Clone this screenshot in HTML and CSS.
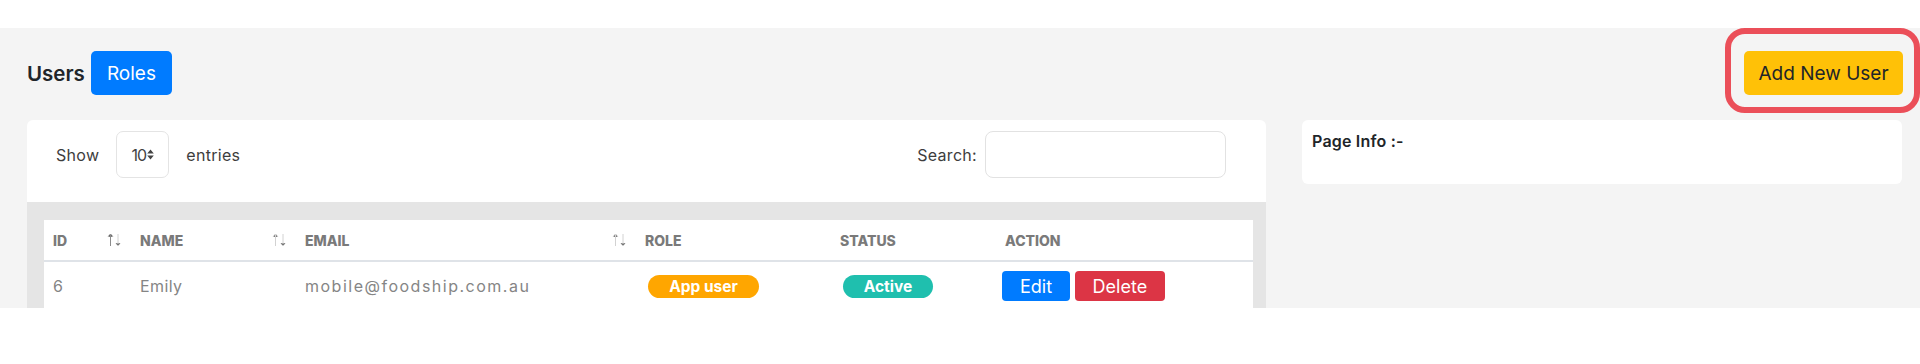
FILE: index.html
```html
<!DOCTYPE html>
<html lang="en">
<head>
    <meta charset="UTF-8">
    <title>Users</title>
    <link rel="stylesheet" href="styles.css">
</head>
<body>

    <div class="main">
        <div class="topbar">
            <div class="title-group">
                <h4>Users</h4>
                <button class="btn btn-primary btn-lg">Roles</button>
            </div>
            <div class="highlight">
                <button class="btn btn-warning btn-lg">Add New User</button>
            </div>
        </div>

        <div class="content">
            <!-- users table -->
            <div class="card">
                <div class="table-tools">
                    <div class="length">
                        <span>Show</span>
                        <div class="select">
                            10
                            <svg class="caret" width="7" height="11" viewBox="0 0 7 11"><path d="M3.5 0.5 L6.8 4.6 H0.2 Z M3.5 10.5 L6.8 6.4 H0.2 Z" fill="#444"/></svg>
                        </div>
                        <span>entries</span>
                    </div>
                    <div class="search">
                        <label for="search">Search:</label>
                        <input type="text" id="search">
                    </div>
                </div>

                <div class="table-wrap">
                    <table class="users">
                        <colgroup>
                            <col style="width: 87px">
                            <col style="width: 165px">
                            <col style="width: 340px">
                            <col style="width: 195px">
                            <col style="width: 165px">
                            <col style="width: 257px">
                        </colgroup>
                        <thead>
                            <tr>
                                <th>ID
                                    <svg class="sort" width="15" height="14" viewBox="0 0 15 14"><path d="M3.5 13 V1 M1.3 3.4 L3.5 1 L5.7 3.4" stroke="#8c8c8c"/><path d="M11 1 V13 M8.8 10.6 L11 13 L13.2 10.6" stroke="#d2d2d2"/></svg>
                                </th>
                                <th>Name
                                    <svg class="sort" width="15" height="14" viewBox="0 0 15 14"><path d="M3.5 13 V1 M1.3 3.4 L3.5 1 L5.7 3.4" stroke="#d2d2d2"/><path d="M11 1 V13 M8.8 10.6 L11 13 L13.2 10.6" stroke="#d2d2d2"/></svg>
                                </th>
                                <th>Email
                                    <svg class="sort" width="15" height="14" viewBox="0 0 15 14"><path d="M3.5 13 V1 M1.3 3.4 L3.5 1 L5.7 3.4" stroke="#d2d2d2"/><path d="M11 1 V13 M8.8 10.6 L11 13 L13.2 10.6" stroke="#d2d2d2"/></svg>
                                </th>
                                <th>Role</th>
                                <th>Status</th>
                                <th>Action</th>
                            </tr>
                        </thead>
                        <tbody>
                            <tr>
                                <td>6</td>
                                <td>Emily</td>
                                <td class="email">mobile@foodship.com.au</td>
                                <td><span class="badge badge-role">App user</span></td>
                                <td><span class="badge badge-active">Active</span></td>
                                <td class="actions">
                                    <button class="btn btn-primary btn-sm">Edit</button>
                                    <button class="btn btn-danger btn-sm">Delete</button>
                                </td>
                            </tr>
                        </tbody>
                    </table>
                </div>
            </div>

            <!-- side info -->
            <div class="info-panel">
                <h5>Page Info :-</h5>
            </div>
        </div>
    </div>

</body>
</html>
```

FILE: styles.css
```css
body {
    font-family: 'Inter', 'Open Sans', sans-serif;
    margin: 0;
    padding: 28px 0 0 0;
    background-color: #fff;
    color: #212529;
}

.main {
    background-color: #f4f4f4;
    height: 280px;
    overflow: hidden;
    padding: 0 17px 0 27px;
}

.topbar {
    display: flex;
    justify-content: space-between;
    align-items: center;
    padding-top: 23px;
}

.title-group {
    display: flex;
    align-items: center;
    gap: 6px;
}

.title-group h4 {
    margin: 0;
    font-size: 20.5px;
    font-weight: 600;
}

.btn {
    font-family: inherit;
    border: 1px solid transparent;
    border-radius: 5px;
    cursor: pointer;
    color: #fff;
}

.btn-lg {
    height: 44px;
    padding: 0 15px;
    font-size: 19px;
}

.btn-sm {
    height: 30px;
    padding: 0 17px;
    font-size: 18px;
    border-radius: 4px;
}

.btn-primary {
    background-color: #007bff;
}

.btn-danger {
    background-color: #dc3545;
}

.btn-warning {
    background-color: #ffc107;
    color: #212529;
    width: 159px;
    padding: 0;
}

.highlight {
    position: relative;
}

.highlight::after {
    content: "";
    position: absolute;
    top: -23px;
    bottom: -18px;
    left: -19px;
    right: -17px;
    border: 6px solid #eb4f59;
    border-radius: 20px;
    pointer-events: none;
}

.content {
    display: flex;
    align-items: flex-start;
    gap: 36px;
    margin-top: 25px;
}

.card {
    width: 1239px;
    flex-shrink: 0;
    background-color: #fff;
    border-radius: 6px;
}

.table-tools {
    height: 82px;
    box-sizing: border-box;
    display: flex;
    justify-content: space-between;
    align-items: flex-start;
    padding: 11px 40px 0 29px;
    font-size: 16px;
    letter-spacing: 0.3px;
    color: #3d3d3d;
}

.length {
    display: flex;
    align-items: center;
    gap: 17px;
}

.select {
    width: 53px;
    height: 47px;
    box-sizing: border-box;
    border: 1px solid #e4e4e4;
    border-radius: 7px;
    display: flex;
    align-items: center;
    justify-content: center;
    gap: 1px;
    font-size: 16px;
    letter-spacing: -1px;
    color: #444;
}

.search {
    display: flex;
    align-items: center;
    gap: 8px;
}

.search input {
    width: 241px;
    height: 47px;
    box-sizing: border-box;
    border: 1px solid #e2e2e2;
    border-radius: 8px;
    outline: none;
}

.table-wrap {
    background-color: #e5e5e5;
    padding: 18px 13px 40px 17px;
}

.users {
    width: 1209px;
    table-layout: fixed;
    border-collapse: collapse;
    background-color: #fff;
}

.users th {
    height: 40px;
    padding: 0 9px;
    text-align: left;
    text-transform: uppercase;
    font-size: 14px;
    font-weight: 800;
    color: #7a7a7a;
    border-bottom: 2px solid #dfe3e8;
    position: relative;
}

.sort {
    position: absolute;
    right: 9px;
    top: 13px;
}

.users td {
    height: 48px;
    padding: 0 9px;
    font-size: 16px;
    letter-spacing: 0.4px;
    color: #858585;
}

.users td.email {
    letter-spacing: 1.5px;
}

.badge {
    display: inline-block;
    margin-left: 3px;
    height: 23px;
    line-height: 23px;
    border-radius: 12px;
    color: #fff;
    font-size: 15.5px;
    font-weight: 700;
    letter-spacing: 0;
    text-align: center;
}

.badge-role {
    width: 111px;
    background-color: #ffa600;
}

.badge-active {
    width: 90px;
    background-color: #1fbfae;
}

.users td.actions {
    padding-left: 6px;
    letter-spacing: 0;
}

.info-panel {
    width: 600px;
    height: 64px;
    box-sizing: border-box;
    background-color: #fff;
    border-radius: 6px;
    padding: 11px 10px;
}

.info-panel h5 {
    margin: 0;
    font-size: 16px;
    font-weight: 600;
    letter-spacing: 0.2px;
    color: #212529;
}
```
